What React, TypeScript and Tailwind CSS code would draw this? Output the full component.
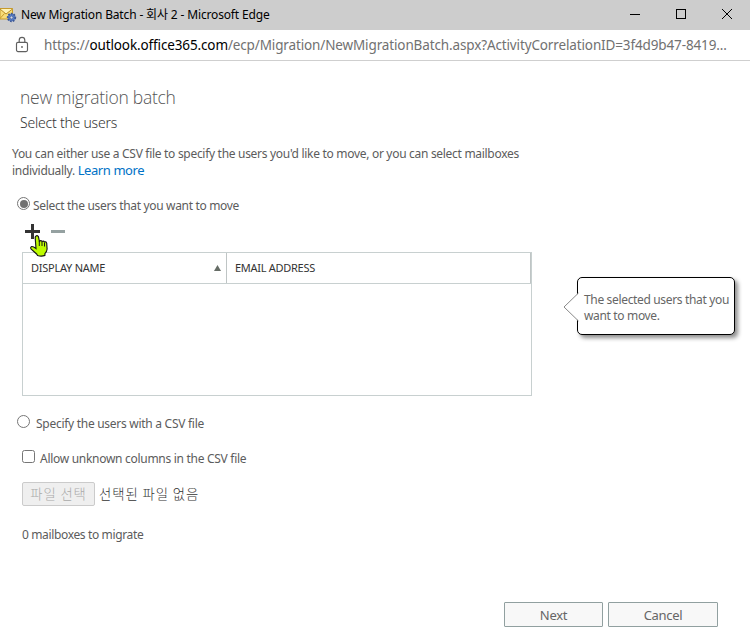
import React from "react";

function MailIcon() {
  return (
    <svg className="h-[16px] w-[17px] shrink-0" viewBox="0 0 17 16">
      <path d="M0 1.5H12.5V12H0Z" fill="#f7dc78" stroke="#c69a2c" />
      <path d="M0 2L6 7L12.5 2" fill="#fff3b5" stroke="#b98d25" />
      <path d="M0 11.5L4.5 6.5" stroke="#c69a2c" fill="none" />
      <circle cx="11.5" cy="10.5" r="3.8" fill="#5a80c8" stroke="#3c5794" strokeWidth="1.8" strokeDasharray="1.7 1.1" />
      <circle cx="11.5" cy="10.5" r="1.5" fill="#d8dbe2" stroke="#34549c" strokeWidth=".7" />
    </svg>
  );
}

function TitleBar() {
  return (
    <header className="flex h-[30px] items-center bg-[#cdcdcd] text-black">
      <MailIcon />
      <h1 className="ml-[4px] flex-1 whitespace-pre text-[12px] leading-[30px] tracking-[-0.15px]">New Migration Batch - 회사 2 - Microsoft Edge</h1>
      <svg className="h-[30px] w-[126px]" viewBox="0 0 126 30" fill="none" stroke="#000" shapeRendering="crispEdges">
        <path d="M6 14.5H16" />
        <path d="M52.5 9.5H61.5V18.5H52.5Z" />
        <path d="M98 9L108 19M108 9L98 19" shapeRendering="auto" />
      </svg>
    </header>
  );
}

function AddressBar() {
  return (
    <div className="flex h-[31px] items-center border-b border-[#cfcfcf] pl-[15px]">
      <svg className="h-[18px] w-[14px] shrink-0" viewBox="0 0 14 18" fill="none" stroke="#606060" strokeWidth="1.15">
        <rect x="1.5" y="6.3" width="11" height="9.3" rx="1.5" />
        <path d="M4.2 6V4.2a2.8 2.8 0 0 1 5.6 0V6" />
        <circle cx="7" cy="11" r=".9" fill="#606060" stroke="none" />
      </svg>
      <div className="ml-[15px] whitespace-pre text-[13.5px] leading-[30px] tracking-[-0.13px] text-[#717171]">
        https://<span className="text-black">outlook.office365.com</span>/ecp/Migration/NewMigrationBatch.aspx?ActivityCorrelationID=3f4d9b47-8419...
      </div>
    </div>
  );
}

function Radio({ on = false }: { on?: boolean }) {
  return (
    <span className="flex size-[13px] shrink-0 items-center justify-center rounded-full border border-[#767676]">
      {on && <span className="size-[8px] rounded-full bg-[#717171]" />}
    </span>
  );
}

function HandCursor() {
  return (
    <svg className="absolute left-[30px] top-[20px] h-[22px] w-[18px]" viewBox="0 0 18 22">
      <path
        d="M5.8 1.2Q7.2-.2 8.4 1.6L9.4 6.4Q10.8 4.9 12 6.5Q13.4 5.5 14.4 6.9Q16 6.2 16.7 8.2L17.1 14Q16.8 17 14.9 18.6V20.4Q11.4 21.8 7.6 20.5L6.6 19L1.2 14.2Q-.1 12.4 1.7 11.5Q3.1 11.2 6 13.5L5.2 2.9Q5.1 1.8 5.8 1.2Z"
        fill="#bdfb00" stroke="#161616" strokeWidth="1.15"
      />
      <path d="M9.3 6V11M12 7V11M14.5 7.5V11.5" stroke="#161616" strokeWidth="1" />
    </svg>
  );
}

function UserTable() {
  return (
    <div className="ml-[22px] h-[144px] w-[510px] border border-[#c8d0d0] text-[11px] text-[#333]">
      <div className="flex h-[31px] border-b border-[#c8d0d0] leading-[30px]">
        <div className="flex w-[204px] items-center justify-between border-r border-[#bfc5c5] pl-[8px] pr-[5px]">
          <span className="tracking-[-0.25px]">DISPLAY NAME</span>
          <svg className="h-[6px] w-[7px]" viewBox="0 0 7 6"><path d="M3.5 0L7 6H0Z" fill="#666d66" /></svg>
        </div>
        <div className="flex-1 border-r border-[#bfc5c5] pl-[8px] tracking-[-0.28px]">EMAIL ADDRESS</div>
      </div>
    </div>
  );
}

function Callout() {
  return (
    <aside className="relative ml-[45px] mt-[25px] h-[58px] w-[158px] rounded-[5px] border border-black bg-white pl-[6px] pt-[14px] text-[12px] leading-[16px] text-[#666] shadow-[3px_3px_4px_rgba(0,0,0,0.45)]">
      <svg className="absolute -left-[15px] top-[14px] h-[30px] w-[16px]" viewBox="0 0 16 30">
        <path d="M15.5 1L1 15L15.5 29" fill="#fff" stroke="#888" />
      </svg>
      <p className="whitespace-nowrap tracking-[-0.34px]">The selected users that you<br />want to move.</p>
    </aside>
  );
}

export default function App() {
  return (
    <main className="flex h-[637px] w-[750px] flex-col overflow-hidden bg-white font-['Noto_Sans','Noto_Sans_CJK_KR',sans-serif] text-[12px] text-[#5c5c5c]">
      <TitleBar />
      <AddressBar />
      <section className="pl-[20px] pt-[23px]">
        <h2 className="h-[27px] font-['Open_Sans',sans-serif] text-[17.5px] font-light leading-[26px] tracking-[-0.28px] text-[#555]">new migration batch</h2>
        <h3 className="h-[24px] text-[14px] font-light leading-[24px] tracking-[-0.22px] text-[#333]">Select the users</h3>
      </section>
      <p className="mt-[10px] h-[35px] whitespace-nowrap pl-[12px] leading-[17px] tracking-[-0.3px]">
        You can either use a CSV file to specify the users you'd like to move, or you can select mailboxes<br />
        individually. <a className="text-[13px] tracking-[-0.42px] text-[#0072c6]">Learn more</a>
      </p>
      <div className="mt-[15px] flex h-[20px] pl-[17px]">
        <div className="pt-[2px]"><Radio on /></div>
        <span className="ml-[3px] pt-px leading-[20px] tracking-[-0.33px]">Select the users that you want to move</span>
      </div>
      <div className="relative h-[37px]">
        <svg className="h-[37px] w-[80px]" viewBox="0 0 80 37" shapeRendering="crispEdges">
          <path d="M25 15H40V18H25ZM31 9H34V24H31Z" fill="#333" />
          <path d="M51 15H65V18H51Z" fill="#95a1a1" />
        </svg>
        <HandCursor />
      </div>
      <div className="flex h-[144px]"><UserTable /><Callout /></div>
      <div className="mt-[19px] flex h-[20px] pl-[17px]">
        <Radio /><span className="ml-[6px] leading-[18px] tracking-[-0.28px]">Specify the users with a CSV file</span>
      </div>
      <div className="mt-[15px] flex h-[20px] pl-[22px]">
        <span className="size-[13px] rounded-[2.5px] border border-[#767676]" />
        <span className="ml-[5px] leading-[18px] tracking-[-0.29px]">Allow unknown columns in the CSV file</span>
      </div>
      <div className="mt-[12px] flex h-[24px] pl-[22px] font-['Noto_Sans_CJK_KR',sans-serif] font-light">
        <button className="h-[24px] w-[73px] rounded-[2px] border border-[#cbcbcb] bg-[#efefef] text-[13.33px] leading-[20px] tracking-[0.9px] text-[#aaa]">파일 선택</button>
        <span className="ml-[4px] text-[13.33px] leading-[24px] tracking-[0.95px] text-[#333]">선택된 파일 없음</span>
      </div>
      <p className="mt-[20px] pl-[22px] leading-[18px] tracking-[-0.36px]">0 mailboxes to migrate</p>
      <footer className="mt-[58px] flex gap-[5px] pl-[504px] text-[13px] leading-[25px] tracking-[-0.3px] text-[#666]">
        <button className="h-[25px] w-[99px] rounded-[1px] border border-[#91a0a0] bg-[#f8f8f8]">Next</button>
        <button className="h-[25px] w-[110px] rounded-[1px] border border-[#91a0a0] bg-[#f8f8f8]">Cancel</button>
      </footer>
    </main>
  );
}
